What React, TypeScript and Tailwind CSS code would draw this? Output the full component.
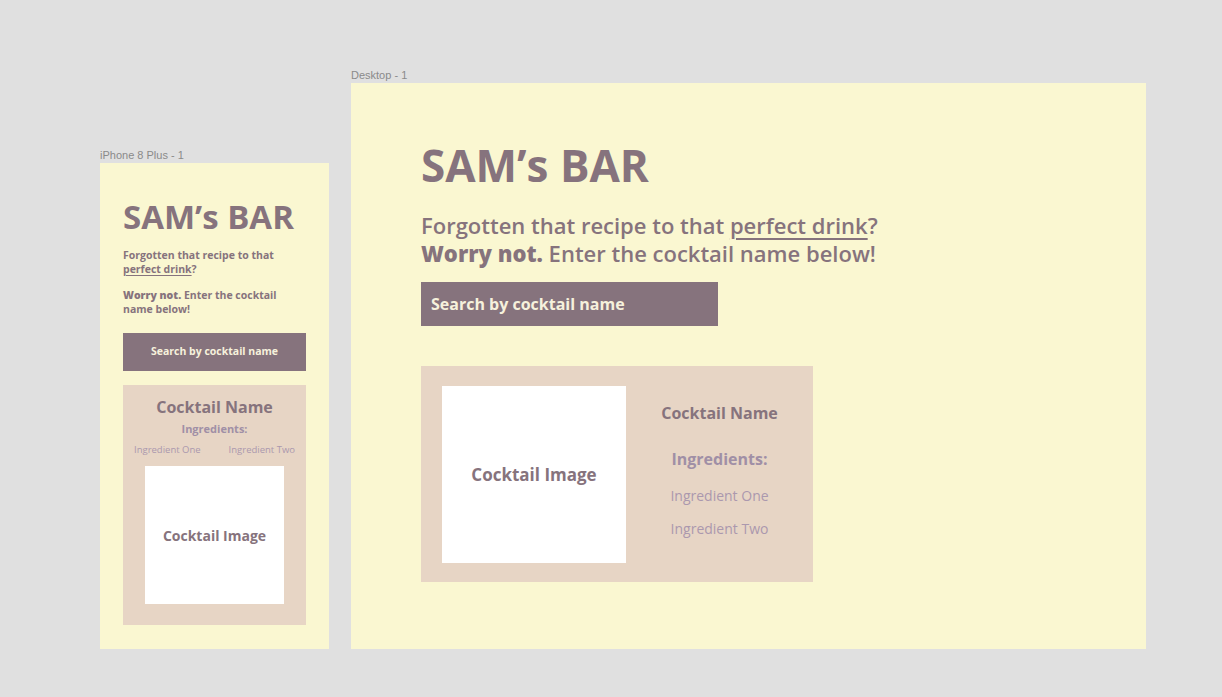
import React from "react";

const font = { fontFamily: "'Open Sans', 'Noto Sans', sans-serif" };

function Phone() {
  return (
    <div className="flex flex-col">
      <div className="text-[11px] leading-[13px] text-[#8a8a8a] mb-[1px]" style={{ fontFamily: "'Liberation Sans', sans-serif" }}>iPhone 8 Plus - 1</div>
      <div className="w-[229px] h-[486px] bg-[#faf7d1] px-[23px] pt-[34px] flex flex-col text-[#86737d]">
        <div className="text-[33px] leading-[40px] font-bold">SAM’s BAR</div>
        <div className="mt-[12px] text-[10.5px] leading-[13.5px] font-bold">
          <div>Forgotten that recipe to that</div>
          <div><span className="underline underline-offset-2">perfect drink</span>?</div>
        </div>
        <div className="mt-[13px] text-[10.5px] leading-[13.5px] font-bold">
          <div><span className="font-extrabold">Worry not.</span> Enter the cocktail</div>
          <div>name below!</div>
        </div>
        <div className="mt-[17px] h-[38px] bg-[#86737d] flex items-center justify-center text-[10.5px] font-bold text-[#f6f1dc]">
          Search by cocktail name
        </div>
        <div className="mt-[14px] h-[240px] bg-[#e7d5c5] flex flex-col items-center pt-[12px]">
          <div className="text-[16px] leading-[20px] font-bold">Cocktail Name</div>
          <div className="mt-[5px] text-[11px] leading-[14px] font-bold text-[#a08fa6]">Ingredients:</div>
          <div className="mt-[8px] w-full flex justify-between px-[11px] text-[9.5px] leading-[12px] text-[#ab98ae]">
            <span>Ingredient One</span>
            <span>Ingredient Two</span>
          </div>
          <div className="mt-[10px] w-[139px] h-[138px] bg-white flex items-center justify-center text-[14px] font-bold">
            Cocktail Image
          </div>
        </div>
      </div>
    </div>
  );
}

function Desktop() {
  return (
    <div className="flex flex-col">
      <div className="text-[11px] leading-[13px] text-[#8a8a8a] mb-[1px]" style={{ fontFamily: "'Liberation Sans', sans-serif" }}>Desktop - 1</div>
      <div className="w-[795px] h-[566px] bg-[#faf7d1] pl-[70px] pt-[56px] flex flex-col items-start text-[#86737d]">
        <div className="text-[44px] leading-[52px] font-bold">SAM’s BAR</div>
        <div className="mt-[20px] text-[22px] leading-[28px] font-semibold">
          <div>Forgotten that recipe to that <span className="underline underline-offset-4 decoration-2">perfect drink</span>?</div>
          <div><span className="font-extrabold">Worry not.</span> Enter the cocktail name below!</div>
        </div>
        <div className="mt-[15px] w-[297px] h-[44px] bg-[#86737d] flex items-center pl-[10px] text-[16px] font-bold text-[#f6f1dc]">
          Search by cocktail name
        </div>
        <div className="mt-[40px] w-[392px] h-[216px] bg-[#e7d5c5] flex pl-[21px] pt-[20px]">
          <div className="w-[184px] h-[177px] bg-white flex items-center justify-center text-[17px] font-bold">
            Cocktail Image
          </div>
          <div className="flex-1 flex flex-col items-center pt-[17px]">
            <div className="text-[16px] leading-[20px] font-bold">Cocktail Name</div>
            <div className="mt-[26px] text-[16px] leading-[20px] font-bold text-[#a08fa6]">Ingredients:</div>
            <div className="mt-[18px] text-[14px] leading-[17px] text-[#ab98ae]">Ingredient One</div>
            <div className="mt-[16px] text-[14px] leading-[17px] text-[#ab98ae]">Ingredient Two</div>
          </div>
        </div>
      </div>
    </div>
  );
}

export default function App() {
  return (
    <div className="w-[1222px] h-[697px] bg-[#e0e0e0] flex items-end gap-[22px] pl-[100px] pb-[48px]" style={font}>
      <Phone />
      <Desktop />
    </div>
  );
}
